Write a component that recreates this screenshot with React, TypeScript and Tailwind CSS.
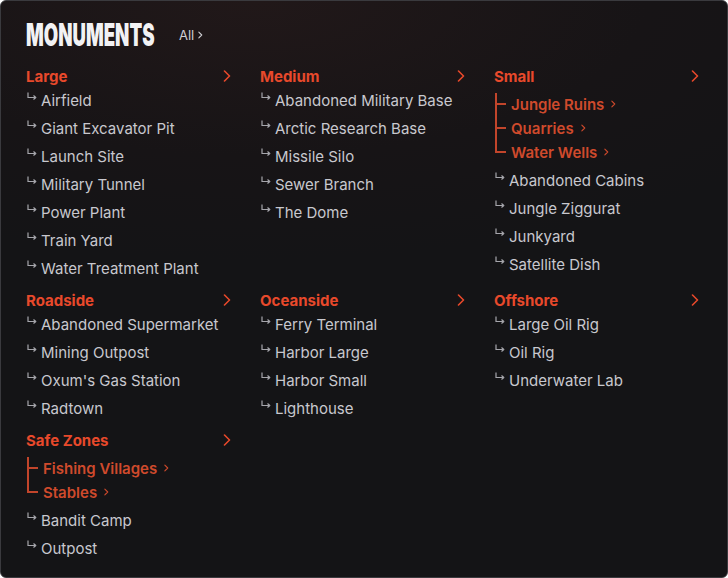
import React from "react";

type Sub = { label: string };
interface Section {
  title: string;
  subs?: Sub[];
  items: string[];
}

// sections laid out row by row, three per row
const sections: Section[] = [
  {
    title: "Large",
    items: [
      "Airfield",
      "Giant Excavator Pit",
      "Launch Site",
      "Military Tunnel",
      "Power Plant",
      "Train Yard",
      "Water Treatment Plant",
    ],
  },
  {
    title: "Medium",
    items: [
      "Abandoned Military Base",
      "Arctic Research Base",
      "Missile Silo",
      "Sewer Branch",
      "The Dome",
    ],
  },
  {
    title: "Small",
    subs: [{ label: "Jungle Ruins" }, { label: "Quarries" }, { label: "Water Wells" }],
    items: ["Abandoned Cabins", "Jungle Ziggurat", "Junkyard", "Satellite Dish"],
  },
  {
    title: "Roadside",
    items: ["Abandoned Supermarket", "Mining Outpost", "Oxum's Gas Station", "Radtown"],
  },
  {
    title: "Oceanside",
    items: ["Ferry Terminal", "Harbor Large", "Harbor Small", "Lighthouse"],
  },
  {
    title: "Offshore",
    items: ["Large Oil Rig", "Oil Rig", "Underwater Lab"],
  },
  {
    title: "Safe Zones",
    subs: [{ label: "Fishing Villages" }, { label: "Stables" }],
    items: ["Bandit Camp", "Outpost"],
  },
];

const Chevron = ({ className }: { className?: string }) => (
  <svg viewBox="0 0 8 12" className={className} fill="none">
    <path d="M1.5 1 L6.5 6 L1.5 11" stroke="currentColor" strokeWidth="1.6" strokeLinecap="round" strokeLinejoin="round" />
  </svg>
);

const SmallChevron = () => (
  <svg viewBox="0 0 6 9" className="w-[5px] h-[8px] text-[#cf4a2c]" fill="none">
    <path d="M1 1 L4.5 4.5 L1 8" stroke="currentColor" strokeWidth="1.3" strokeLinecap="round" strokeLinejoin="round" />
  </svg>
);

const ItemArrow = () => (
  <svg viewBox="0 0 10 8" className="w-[10px] h-[8px] mb-[9px] ml-[1px] text-[#a6a6ac] shrink-0" fill="none">
    <path d="M1 0.5 V5.5 H8.5" stroke="currentColor" strokeWidth="1.2" />
    <path d="M6.5 3.5 L8.8 5.5 L6.5 7.5" stroke="currentColor" strokeWidth="1.2" strokeLinejoin="round" />
  </svg>
);

function SectionBlock({ section }: { section: Section }) {
  return (
    <div>
      <div className="h-[20px] flex items-center justify-between">
        <span className="text-[15px] font-bold text-[#e8492b] leading-none">{section.title}</span>
        <Chevron className="w-[8px] h-[12px] mr-[1px] text-[#e8492b]" />
      </div>
      {section.subs && (
        <div className="pt-[6px] pb-[2px]">
          {section.subs.map((s, i) => {
            const first = i === 0;
            const last = i === section.subs!.length - 1;
            return (
              <div key={s.label} className="relative h-[24px] flex items-center gap-[7px] pl-[17px]">
                {/* tree line */}
                <span
                  className={`absolute left-[1px] w-[2px] bg-[#c2452b] ${first ? "top-[1px]" : "top-0"} ${
                    last ? "h-[13px]" : "bottom-0"
                  } ${first && last ? "h-[12px]" : ""}`}
                />
                <span className="absolute left-[1px] top-[11px] w-[11px] h-[2px] bg-[#c2452b]" />
                <span className="text-[15px] font-semibold text-[#cf4a2c] leading-none">{s.label}</span>
                <SmallChevron />
              </div>
            );
          })}
        </div>
      )}
      {section.items.map((item) => (
        <div key={item} className="h-[28px] flex items-center gap-[4px]">
          <ItemArrow />
          <span className="text-[15px] text-[#c8c8ce] leading-none">{item}</span>
        </div>
      ))}
    </div>
  );
}

export default function App() {
  return (
    <div
      className="w-[728px] h-[578px] overflow-hidden rounded-[6px] border border-[#3a3a3e] bg-[radial-gradient(ellipse_90%_45%_at_35%_0%,#211819_0%,#171416_60%,#141416_100%)] px-[25px] pt-[17px]"
      style={{ fontFamily: "Inter, 'Noto Sans', sans-serif" }}
    >
      <div className="h-[34px] flex items-center">
        <div className="w-[153px] overflow-visible">
          <span className="inline-block origin-left scale-x-[0.6] text-[31px] font-black text-[#f2f2f4] leading-none tracking-[0px] whitespace-nowrap">
            MONUMENTS
          </span>
        </div>
        <span className="flex items-center gap-[4px] text-[13px] text-[#cfcfd4] leading-none">
          All
          <svg viewBox="0 0 6 9" className="w-[5px] h-[8px]" fill="none">
            <path d="M1 1 L4.5 4.5 L1 8" stroke="currentColor" strokeWidth="1.3" strokeLinecap="round" strokeLinejoin="round" />
          </svg>
        </span>
      </div>

      <div className="mt-[14px] grid grid-cols-[206px_206px_206px] gap-x-[28px] gap-y-[8px] items-start">
        {sections.map((s) => (
          <SectionBlock key={s.title} section={s} />
        ))}
      </div>
    </div>
  );
}
